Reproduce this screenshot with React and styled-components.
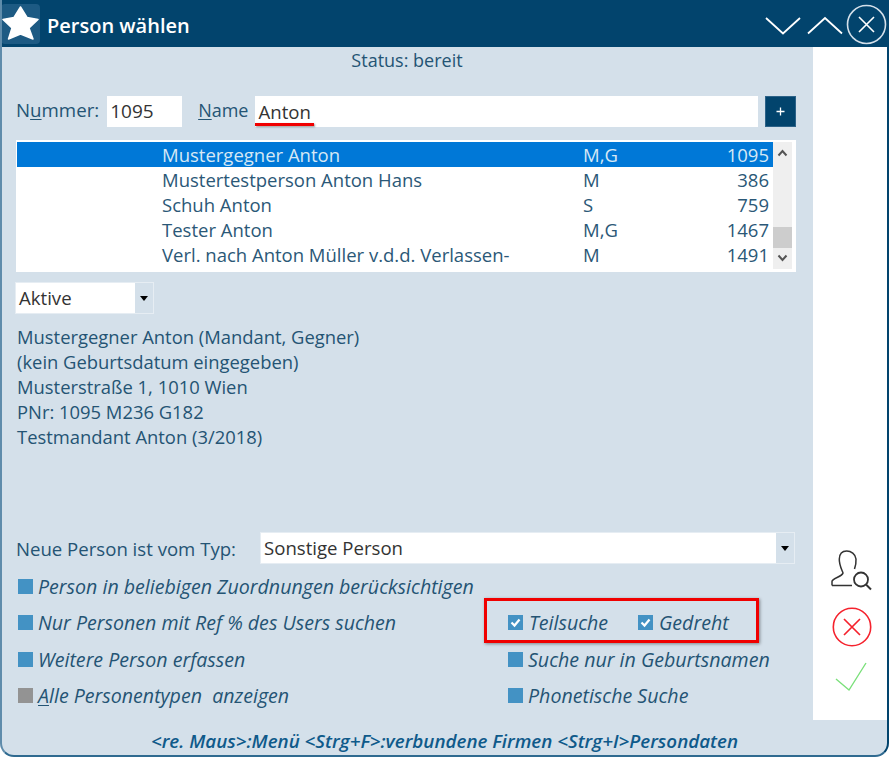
import React from "react";
import styled, { createGlobalStyle } from "styled-components";

const Global = createGlobalStyle`
  html, body { margin: 0; padding: 0; background: #fff; }
  body { font-family: "Open Sans", "Noto Sans", sans-serif; }
  * { box-sizing: border-box; }
`;

const Page = styled.div`
  width: 892px;
  height: 758px;
  background: #fff;
  overflow: hidden;
`;

const Window = styled.div`
  width: 889px;
  height: 757px;
  background: #d4e0ea;
  border-left: 2px solid #5f8cab;
  border-right: 2px solid #02446d;
  border-bottom: 2px solid #2f6a90;
  border-radius: 0 0 14px 14px;
  overflow: hidden;
  display: flex;
  flex-direction: column;
`;

const TitleBar = styled.header`
  height: 47px;
  margin-left: -2px;
  margin-right: -2px;
  flex: none;
  background: #02446d;
  display: flex;
  align-items: center;
  padding: 2px 2px 0 1px;
`;

const StarTile = styled.div`
  width: 39px;
  height: 40px;
  background: #1d5a83;
  border-radius: 4px;
  display: flex;
  align-items: center;
  justify-content: center;
  margin-top: -1px;
`;

const Title = styled.h1`
  margin: 1px 0 0 7px;
  font-size: 20px;
  font-weight: 600;
  color: #fff;
  flex: 1;
`;

const WinIcon = styled.svg`
  display: block;
  flex: none;
  margin-right: ${(p) => p.$mr || 0}px;
`;

const Body = styled.div`
  flex: 1;
  display: flex;
  min-height: 0;
`;

const Main = styled.main`
  width: 811px;
  flex: none;
  padding: 0 17px 0 14px;
  display: flex;
  flex-direction: column;
  color: #245474;
  font-size: 18.4px;
`;

const Status = styled.div`
  height: 26px;
  line-height: 26px;
  text-align: center;
  padding-left: 2px;
  font-size: 18px;
`;

const SearchRow = styled.div`
  margin-top: 23px;
  display: flex;
  align-items: center;
  height: 31px;
`;

const Label = styled.label`
  font-size: 18.7px;
  line-height: 26px;
  margin-top: -4px;
  u { text-underline-offset: 2px; }
`;

const NumberInput = styled.div`
  width: 75px;
  height: 31px;
  margin-left: 8px;
  background: #fff;
  color: #333;
  padding-left: 3px;
  font-size: 19px;
  line-height: 31px;
`;

const NameLabel = styled(Label)`
  margin-left: 16px;
  font-size: 18px;
`;

const NameInput = styled.div`
  position: relative;
  width: 503px;
  height: 31px;
  margin-left: 7px;
  background: #fff;
  color: #333;
  padding-left: 3px;
  font-size: 18.6px;
  line-height: 31px;
`;

const RedUnderline = styled.span`
  position: absolute;
  left: 0;
  top: 27px;
  width: 59px;
  height: 3px;
  background: #f00000;
  box-shadow: 1px 1px 2px rgba(0, 0, 0, 0.4);
`;

const PlusButton = styled.button`
  width: 31px;
  height: 31px;
  margin-left: 7px;
  border: 1px solid #2c6288;
  background: #02446d;
  color: #fff;
  padding: 0;
  display: flex;
  align-items: center;
  justify-content: center;
`;

const List = styled.div`
  margin-top: 13px;
  height: 132px;
  background: #fff;
  padding: 2px 4px 3px 1px;
  display: flex;
`;

const Rows = styled.div`
  flex: 1;
  display: flex;
  flex-direction: column;
`;

const Row = styled.div`
  height: 25px;
  flex: none;
  display: grid;
  grid-template-columns: 421px 1fr auto;
  padding: 0 4px 0 145px;
  line-height: 25px;
  font-size: 18.5px;
  background: ${(p) => (p.$selected ? "#0078d7" : "transparent")};
  color: ${(p) => (p.$selected ? "#d6e8f5" : "#2b5877")};
`;

const Scrollbar = styled.div`
  width: 19px;
  background: #efefef;
  display: flex;
  flex-direction: column;
  align-items: center;
  position: relative;
  padding: 7px 0;
  justify-content: space-between;
`;

const Thumb = styled.div`
  position: absolute;
  top: 85px;
  left: 0;
  width: 19px;
  height: 21px;
  background: #cdcdcd;
`;

const FilterSelect = styled.div`
  margin-top: 10px;
  margin-left: -1px;
  width: 139px;
  height: 32px;
  background: #fff;
  border: 1px solid #e6edf3;
  display: flex;
  color: #333;
`;

const SelectText = styled.div`
  flex: 1;
  padding-left: 3px;
  font-size: 18.6px;
  line-height: 29px;
`;

const Arrow = styled.div`
  width: 18px;
  background: #d4e0ea;
  display: flex;
  align-items: center;
  justify-content: center;
  &::before {
    content: "";
    width: 0;
    height: 0;
    border-left: 4px solid transparent;
    border-right: 4px solid transparent;
    border-top: 5px solid #000;
  }
`;

const Details = styled.div`
  margin-top: 10px;
  padding-left: 1px;
  line-height: 25px;
  height: 208px;
  font-size: 18.4px;
`;

const TypeRow = styled.div`
  display: flex;
  align-items: center;
  height: 32px;
`;

const TypeLabel = styled.span`
  width: 244px;
  font-size: 18.6px;
`;

const TypeSelect = styled(FilterSelect)`
  margin: 0;
  width: 535px;
  flex: none;
`;

const Options = styled.div`
  margin-top: 4px;
  display: grid;
  grid-template-columns: 490px 1fr;
  grid-auto-rows: 36.5px;
  padding-left: 2px;
`;

const Option = styled.div`
  display: flex;
  align-items: center;
  gap: 5px;
  font-style: italic;
  font-size: 19.6px;
  white-space: nowrap;
  position: relative;
  u { text-underline-offset: 2px; }
`;

const Square = styled.span`
  width: 15px;
  height: 15px;
  flex: none;
  background: ${(p) => (p.$grey ? "#939393" : "#4392c4")};
  display: flex;
  align-items: center;
  justify-content: center;
`;

const CheckPair = styled.div`
  display: flex;
  position: relative;
`;

const PairItem = styled(Option)`
  width: 130px;
  gap: 6px;
`;

const RedFrame = styled.div`
  position: absolute;
  left: -24px;
  top: -7px;
  width: 275px;
  height: 45px;
  border: 3px solid #f00000;
  box-shadow: 1px 1px 3px rgba(0, 0, 0, 0.4);
  pointer-events: none;
`;

const Hint = styled.div`
  margin-top: 14px;
  padding-left: 77px;
  text-align: center;
  font-style: italic;
  font-weight: 600;
  font-size: 18.8px;
  color: #0f5a8a;
  white-space: nowrap;
`;

const Side = styled.aside`
  width: 74px;
  height: 673px;
  flex: none;
  background: #fff;
  display: flex;
  flex-direction: column;
  align-items: center;
  padding: 503px 0 0 4px;
`;

const SideIcon = styled.svg`
  display: block;
  flex: none;
  margin-top: ${(p) => p.$mt || 0}px;
`;

const Check = () => (
  <svg width="11" height="11" viewBox="0 0 11 11">
    <path d="M1.5 5.5 L4.5 8.5 L9.5 2.5" fill="none" stroke="#fff" strokeWidth="2.2" />
  </svg>
);

const Chevron = ({ up }) => (
  <svg width="11" height="8" viewBox="0 0 11 8">
    <path d={up ? "M1.5 6.5 L5.5 2 L9.5 6.5" : "M1.5 1.5 L5.5 6 L9.5 1.5"} fill="none" stroke="#555" strokeWidth="2" />
  </svg>
);

const rows = [
  ["Mustergegner Anton", "M,G", "1095", true],
  ["Mustertestperson Anton Hans", "M", "386"],
  ["Schuh Anton", "S", "759"],
  ["Tester Anton", "M,G", "1467"],
  ["Verl. nach Anton Müller v.d.d. Verlassen-", "M", "1491"],
];

export default function App() {
  return (
    <Page>
      <Global />
      <Window>
        <TitleBar>
          <StarTile>
            <svg width="39" height="40" viewBox="0 0 39 40">
              <path
                d="M19.5 3 L26 13.5 L37 15.5 L28 24 L32 35 L19.5 30 L7.5 35 L11 24 L2 15.5 L13 13.5 Z"
                fill="#fff"
                stroke="#fff"
                strokeWidth="1.5"
                strokeLinejoin="round"
              />
            </svg>
          </StarTile>
          <Title>Person wählen</Title>
          <WinIcon $mr={4} width="38" height="22" viewBox="0 0 38 22">
            <path d="M2 4 L19 19.5 L36 4" fill="none" stroke="#fff" strokeWidth="1.8" />
          </WinIcon>
          <WinIcon $mr={2} width="38" height="22" viewBox="0 0 38 22">
            <path d="M2 19.5 L19 4 L36 19.5" fill="none" stroke="#fff" strokeWidth="1.8" />
          </WinIcon>
          <WinIcon width="41" height="41" viewBox="0 0 41 41">
            <circle cx="20.5" cy="20.5" r="19" fill="none" stroke="#d4e0ea" strokeWidth="1.6" />
            <path d="M13 13 L28 28 M28 13 L13 28" stroke="#fff" strokeWidth="1.6" />
          </WinIcon>
        </TitleBar>
        <Body>
          <Main>
            <Status>Status: bereit</Status>
            <SearchRow>
              <Label>N<u>u</u>mmer:</Label>
              <NumberInput>1095</NumberInput>
              <NameLabel><u>N</u>ame</NameLabel>
              <NameInput>
                Anton
                <RedUnderline />
              </NameInput>
              <PlusButton>
                <svg width="11" height="11" viewBox="0 0 11 11">
                  <path d="M5.5 1.5 V9.5 M1.5 5.5 H9.5" stroke="#fff" strokeWidth="1.3" />
                </svg>
              </PlusButton>
            </SearchRow>
            <List>
              <Rows>
                {rows.map(([n, t, id, s]) => (
                  <Row key={id} $selected={s}>
                    <span>{n}</span>
                    <span>{t}</span>
                    <span>{id}</span>
                  </Row>
                ))}
              </Rows>
              <Scrollbar>
                <Chevron up />
                <Thumb />
                <Chevron />
              </Scrollbar>
            </List>
            <FilterSelect>
              <SelectText>Aktive</SelectText>
              <Arrow />
            </FilterSelect>
            <Details>
              Mustergegner Anton (Mandant, Gegner)<br />
              (kein Geburtsdatum eingegeben)<br />
              Musterstraße 1, 1010 Wien<br />
              PNr: 1095 M236 G182<br />
              Testmandant Anton (3/2018)
            </Details>
            <TypeRow>
              <TypeLabel>Neue Person ist vom Typ:</TypeLabel>
              <TypeSelect>
                <SelectText>Sonstige Person</SelectText>
                <Arrow />
              </TypeSelect>
            </TypeRow>
            <Options>
              <Option><Square />Person in beliebigen Zuordnungen berücksichtigen</Option>
              <div />
              <Option><Square />Nur Personen mit Ref % des Users suchen</Option>
              <CheckPair>
                <RedFrame />
                <PairItem><Square><Check /></Square>Teilsuche</PairItem>
                <PairItem><Square><Check /></Square>Gedreht</PairItem>
              </CheckPair>
              <Option><Square />Weitere Person erfassen</Option>
              <Option><Square />Suche nur in Geburtsnamen</Option>
              <Option><Square $grey /><span><u>A</u>lle Personentypen&nbsp; anzeigen</span></Option>
              <Option><Square />Phonetische Suche</Option>
            </Options>
            <Hint>&lt;re. Maus&gt;:Menü &lt;Strg+F&gt;:verbundene Firmen &lt;Strg+I&gt;Persondaten</Hint>
          </Main>
          <Side>
            <SideIcon width="42" height="42" viewBox="0 0 42 42">
              <path
                d="M1 35.5 V31.5 C1 28 11 27 12 23 C10 18 8 14 8.3 9 C8.5 3 12 1 15.7 1 C20 1 24.5 4 25 9 C25.3 13 24.5 16 23.5 19 M1 35.5 H21"
                fill="none"
                stroke="#333"
                strokeWidth="1.5"
              />
              <circle cx="30" cy="29.5" r="7" fill="none" stroke="#333" strokeWidth="1.8" />
              <path d="M35 34.5 L40 39.5" stroke="#333" strokeWidth="2" />
            </SideIcon>
            <SideIcon $mt={15} width="40" height="40" viewBox="0 0 40 40">
              <circle cx="20" cy="20" r="18.7" fill="none" stroke="#f5222d" strokeWidth="1.6" />
              <path d="M12 12 L28 28 M28 12 L12 28" stroke="#f5222d" strokeWidth="1.7" />
            </SideIcon>
            <SideIcon $mt={14} width="34" height="32" viewBox="0 0 34 32">
              <path d="M1 18 L14 29 L31 2" fill="none" stroke="#7be07b" strokeWidth="1.4" />
            </SideIcon>
          </Side>
        </Body>
      </Window>
    </Page>
  );
}
